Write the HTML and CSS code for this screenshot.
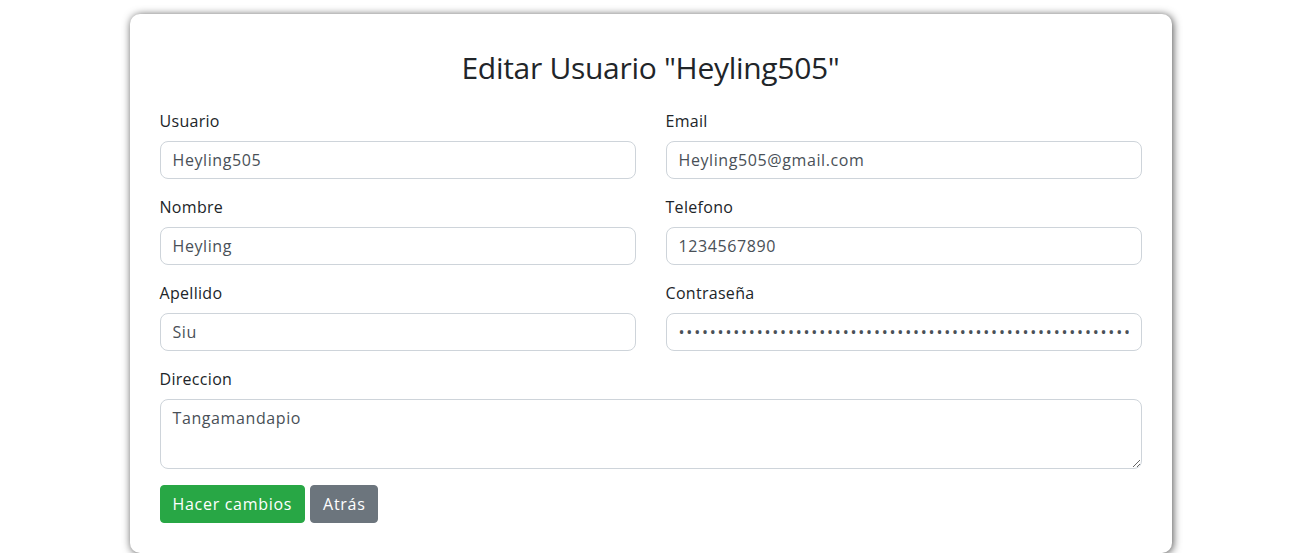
FILE: index.html
```html
<!DOCTYPE html>
<html lang="es">
<head>
<meta charset="utf-8">
<title>Editar Usuario</title>
<link rel="stylesheet" href="styles.css">
</head>
<body>
<div class="card">
  <h2 class="title">Editar Usuario "Heyling505"</h2>
  <form class="form">
    <div class="grid">
      <div class="field">
        <label class="label">Usuario</label>
        <input class="input" type="text" value="Heyling505">
      </div>
      <div class="field">
        <label class="label">Email</label>
        <input class="input" type="email" value="Heyling505@gmail.com">
      </div>
      <div class="field">
        <label class="label">Nombre</label>
        <input class="input" type="text" value="Heyling">
      </div>
      <div class="field">
        <label class="label">Telefono</label>
        <input class="input" type="text" value="1234567890">
      </div>
      <div class="field">
        <label class="label">Apellido</label>
        <input class="input" type="text" value="Siu">
      </div>
      <div class="field">
        <label class="label">Contraseña</label>
        <input class="input password" type="password" value="$2y$10$abcdefghijklmnopqrstuvwxyzABCDEFGHIJKLMNOPQRSTUVWXYZ0123">
      </div>
      <div class="field wide">
        <label class="label">Direccion</label>
        <textarea class="input textarea">Tangamandapio</textarea>
      </div>
    </div>
    <div class="actions">
      <button type="button" class="btn btn-green">Hacer cambios</button>
      <button type="button" class="btn btn-gray">Atrás</button>
    </div>
  </form>
</div>
</body>
</html>
```
FILE: styles.css
```css
* { box-sizing: border-box; }
body {
  margin: 0;
  background: #fff;
  font-family: "Open Sans", "Liberation Sans", sans-serif;
  color: #212529;
  font-size: 16px;
  line-height: 1.5;
}
.card {
  width: 1042px;
  margin: 14px auto 0;
  padding: 30px;
  background: #fff;
  border-radius: 10px;
  box-shadow: 1px 1px 8px rgba(0, 0, 0, 0.7);
}
.title {
  margin: 6px 0 23px;
  font-size: 30px;
  font-weight: 400;
  line-height: 36px;
  letter-spacing: -0.3px;
  text-align: center;
  color: #212529;
}
.grid {
  display: grid;
  grid-template-columns: 1fr 1fr;
  column-gap: 30px;
}
.field {
  display: flex;
  flex-direction: column;
  margin-bottom: 16px;
}
.wide { grid-column: 1 / 3; }
.label {
  margin-bottom: 8px;
  font-size: 16px;
  line-height: 24px;
  letter-spacing: 0.3px;
}
.input {
  display: block;
  width: 100%;
  height: 38px;
  padding: 6px 12px;
  font-family: inherit;
  font-size: 16px;
  line-height: 24px;
  letter-spacing: 0.6px;
  color: #495057;
  background: #fff;
  border: 1px solid #ced4da;
  border-radius: 8px;
}
.password { letter-spacing: 1.8px; }
.textarea {
  height: 70px;
  resize: vertical;
}
.actions {
  display: flex;
  gap: 5px;
}
.btn {
  height: 38px;
  padding: 6px 12px;
  font-family: inherit;
  font-size: 16px;
  line-height: 24px;
  letter-spacing: 0.7px;
  color: #fff;
  border: 1px solid transparent;
  border-radius: 4px;
}
.btn-green { background: #28a745; border-color: #28a745; }
.btn-gray { background: #6c757d; border-color: #6c757d; }
```
